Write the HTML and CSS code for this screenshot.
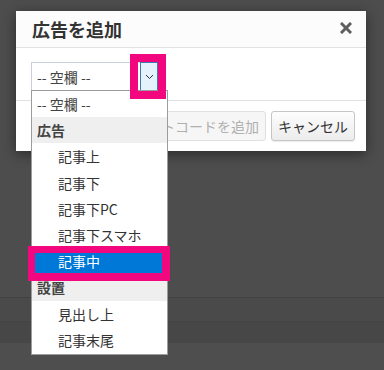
FILE: index.html
```html
<!DOCTYPE html>
<html lang="ja">
<head>
<meta charset="utf-8">
<link rel="stylesheet" href="styles.css">
</head>
<body>
<div class="page">
  <div class="bg-top"></div>
  <div class="bg-line"></div>
  <div class="bg-mid"></div>
  <div class="bg-band"></div>
  <div class="bg-rest"></div>
</div>

<div class="dialog">
  <div class="dlg-head">
    <h1 class="dlg-title">広告を追加</h1>
    <svg class="close" width="12" height="12" viewBox="0 0 12 12"><path d="M2 2 L10 10 M10 2 L2 10" stroke="#5f5f5f" stroke-width="3" stroke-linecap="square"/></svg>
  </div>
  <div class="dlg-body">
    <div class="select">
      <span class="select-text">-- 空欄 --</span>
      <span class="select-btn"><svg width="9" height="6" viewBox="0 0 9 6"><polyline points="1,1 4.5,4.5 8,1" fill="none" stroke="#333" stroke-width="1"/></svg></span>
    </div>
  </div>
  <div class="dlg-foot">
    <button class="btn btn-disabled">ショートコードを追加</button>
    <button class="btn">キャンセル</button>
  </div>
</div>

<ul class="list">
  <li class="opt opt-top">-- 空欄 --</li>
  <li class="grp">広告</li>
  <li class="opt">記事上</li>
  <li class="opt">記事下</li>
  <li class="opt">記事下PC</li>
  <li class="opt">記事下スマホ</li>
  <li class="opt opt-sel">記事中</li>
  <li class="grp">設置</li>
  <li class="opt">見出し上</li>
  <li class="opt">記事末尾</li>
</ul>

<div class="mark mark-arrow"></div>
<div class="mark mark-item"></div>
</body>
</html>
```

FILE: styles.css
```css
html, body {
  margin: 0;
  padding: 0;
}
body {
  width: 384px;
  height: 370px;
  overflow: hidden;
  background: #4d4d4d;
  font-family: "Noto Sans CJK JP", "Noto Sans", sans-serif;
  color: #333;
}
.page {
  display: flex;
  flex-direction: column;
}
.bg-top { height: 297px; background: #4d4d4d; }
.bg-line { height: 1px; background: #424242; }
.bg-mid { height: 23px; background: #4a4a4a; border-bottom: 1px solid #454545; }
.bg-band { height: 21px; background: #474747; }
.bg-rest { height: 27px; background: #4e4e4e; }

.dialog {
  position: absolute;
  left: 16px;
  top: 11px;
  width: 350px;
  height: 140px;
  background: #fff;
  box-shadow: 0 3px 12px rgba(0,0,0,0.45);
  display: flex;
  flex-direction: column;
}
.dlg-head {
  height: 36px;
  background: #fcfcfc;
  border-bottom: 1px solid #e2e2e2;
  display: flex;
  align-items: center;
  justify-content: space-between;
  padding: 0 14px 0 16px;
}
.dlg-title {
  margin: 0;
  font-size: 18px;
  font-weight: bold;
  color: #333;
  line-height: 1;
}
.close { display: block; margin-top: -2px; }
.dlg-body {
  height: 52px;
  padding: 0 15px;
  border-bottom: 1px solid #e2e2e2;
  display: flex;
  align-items: flex-start;
  padding-top: 14px;
  box-sizing: border-box;
  height: 53px;
}
.select {
  width: 127px;
  height: 29px;
  box-sizing: border-box;
  border: 1px solid #c7d0dc;
  display: flex;
  align-items: center;
  justify-content: space-between;
  background: #fff;
}
.select-text {
  font-size: 14px;
  color: #444;
  padding-left: 5px;
  line-height: 1;
}
.select-btn {
  width: 18px;
  height: 29px;
  margin: -1px -1px -1px 0;
  box-sizing: border-box;
  border: 1px solid #3b79b2;
  background: #e5f1fb;
  display: flex;
  align-items: center;
  justify-content: center;
}
.select-btn svg { display: block; }
.dlg-foot {
  flex: 1;
  display: flex;
  justify-content: flex-end;
  align-items: center;
  gap: 5px;
  padding: 0 11px 0 0;
}
.btn {
  height: 30px;
  box-sizing: border-box;
  border: 1px solid #c6c6c6;
  border-radius: 3px;
  background: linear-gradient(#fdfdfd, #ececec);
  font-family: inherit;
  font-size: 14px;
  color: #333;
  padding: 0 6px;
  box-shadow: 0 1px 1px rgba(0,0,0,0.08);
  line-height: 1;
}
.btn-disabled {
  background: #f6f6f6;
  border-color: #e0e0e0;
  color: #b0b0b0;
  box-shadow: none;
}

.list {
  position: absolute;
  left: 31px;
  top: 90px;
  width: 137px;
  margin: 0;
  padding: 0 0 1px 0;
  list-style: none;
  box-sizing: border-box;
  background: #fff;
  border: 1px solid #9c9c9c;
}
.opt, .grp {
  height: 26.2px;
  display: flex;
  align-items: center;
  font-size: 14px;
  line-height: 1;
  color: #333;
}
.opt { padding-left: 26px; }
.opt-top { padding-left: 5px; color: #444; }
.grp {
  padding-left: 5px;
  background: #efefef;
  font-weight: bold;
  color: #444;
}
.opt-sel {
  background: #0078d7;
  color: #fff;
}

.mark {
  position: absolute;
  box-sizing: border-box;
  border: 8px solid #f2077f;
}
.mark-arrow {
  left: 130px;
  top: 54px;
  width: 36px;
  height: 45px;
}
.mark-item {
  left: 28px;
  top: 246px;
  width: 142px;
  height: 35px;
  border-width: 7px 8px 8px 7px;
}
```
